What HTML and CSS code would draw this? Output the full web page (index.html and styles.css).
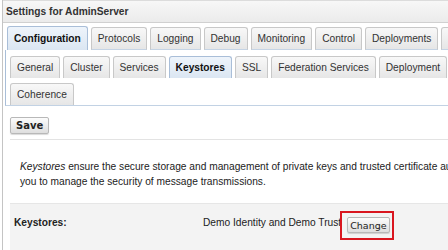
FILE: index.html
```html
<!DOCTYPE html>
<html lang="en">
<head>
    <meta charset="UTF-8">
    <meta name="viewport" content="width=device-width, initial-scale=1.0">
    <title>Settings for AdminServer</title>
    <link rel="stylesheet" href="styles.css">
</head>
<body>
    <div class="page">
        <div class="title">Settings for AdminServer</div>
        <ul class="tabs tabs-main">
            <li class="tab active">Configuration</li>
            <li class="tab">Protocols</li>
            <li class="tab">Logging</li>
            <li class="tab">Debug</li>
            <li class="tab">Monitoring</li>
            <li class="tab">Control</li>
            <li class="tab">Deployments</li>
            <li class="tab">Services</li>
        </ul>
        <div class="panel">
            <ul class="tabs tabs-sub">
                <li class="tab">General</li>
                <li class="tab">Cluster</li>
                <li class="tab">Services</li>
                <li class="tab active">Keystores</li>
                <li class="tab">SSL</li>
                <li class="tab">Federation Services</li>
                <li class="tab">Deployment</li>
                <li class="tab">Migration</li>
            </ul>
            <ul class="tabs tabs-sub">
                <li class="tab">Coherence</li>
            </ul>
        </div>
        <div class="content">
            <div class="toolbar">
                <button class="btn btn-save">Save</button>
            </div>
            <p class="intro"><em>Keystores</em> ensure the secure storage and management of private keys and trusted certificate authorities (CAs). This page lets<br>you to manage the security of message transmissions.</p>
            <div class="field-row">
                <span class="field-label">Keystores:</span>
                <span class="field-value">Demo Identity and Demo Trust</span>
                <span class="highlight"><button class="btn btn-small">Change</button></span>
            </div>
        </div>
    </div>
</body>
</html>
```

FILE: styles.css
```css
body {
    margin: 0;
    font-family: "Liberation Sans", Arial, sans-serif;
    font-size: 10.2px;
    color: #222;
    background-color: #fff;
    overflow: hidden;
}
.page {
    margin-left: 2px;
    border-left: 1px solid #c4c4c4;
    min-height: 250px;
    width: 700px;
}
.title {
    height: 21px;
    line-height: 21px;
    padding-left: 3px;
    font-weight: bold;
    color: #333;
    background: linear-gradient(#f7f7f7, #ebebeb);
    border-top: 1px solid #dcdcdc;
    border-bottom: 1px solid #d0d0d0;
}
.tabs {
    display: flex;
    align-items: flex-end;
    gap: 3px;
    list-style: none;
    margin: 0;
    padding: 0;
    white-space: nowrap;
}
.tab {
    padding: 0 6px;
    color: #333;
    border: 1px solid #c8c8c8;
    border-bottom: none;
    border-radius: 3px 3px 0 0;
    background: linear-gradient(#f8f8f8, #e6e6e6);
}
.tab.active {
    font-weight: bold;
    color: #111;
    border-color: #a9bed8;
    background: linear-gradient(#eef4fb, #dbe6f2);
}
.tabs-main {
    margin-top: 3px;
    padding-left: 4px;
}
.tabs-main .tab {
    height: 21px;
    line-height: 22px;
    border-bottom: 1px solid #c5d4e5;
}
.tabs-main .tab.active {
    height: 23px;
    line-height: 23px;
    border-bottom: none;
}
.panel {
    margin-left: 2px;
    padding: 6px 0 0 4px;
    border-left: 1px solid #a9bed8;
    border-bottom: 1px solid #c2d2e4;
}
.tabs-sub + .tabs-sub {
    margin-top: 5px;
}
.tabs-sub .tab {
    height: 21px;
    line-height: 21px;
}
.content {
    padding: 11px 0 0 7px;
}
.btn {
    font-family: "DejaVu Sans", sans-serif;
    font-size: 10px;
    color: #222;
    height: 17px;
    padding: 0 5px;
    border: 1px solid #b8b8b8;
    border-radius: 2px;
    background: linear-gradient(#fcfcfc, #dedede);
    box-shadow: 0 1px 1px rgba(0, 0, 0, 0.15);
}
.btn-save {
    font-weight: bold;
}
.btn-small {
    font-size: 9.5px;
    height: 16px;
    padding: 0 2px;
}
.toolbar {
    padding-bottom: 5px;
    border-bottom: 1px solid #e3e3e3;
}
.intro {
    margin: 19px 0 0 10px;
    line-height: 15px;
    white-space: nowrap;
    color: #222;
}
.field-row {
    display: flex;
    align-items: flex-start;
    margin-top: 14px;
    padding: 11px 0 14px 4px;
    border-top: 1px solid #e6e6e6;
    background-color: #f3f3f3;
    line-height: 15px;
}
.field-label {
    width: 189px;
    font-weight: bold;
}
.highlight {
    display: inline-flex;
    margin: -4px 0 0 -1px;
    padding: 4px 2px 5px 5px;
    border: 2px solid #d9161f;
}
```
